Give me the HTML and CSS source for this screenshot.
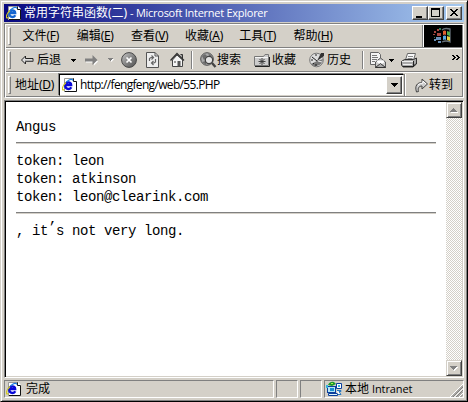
FILE: index.html
```html
<!DOCTYPE html>
<html lang="zh-CN">
<head>
<meta charset="utf-8">
<title>常用字符串函数(二)</title>
<link rel="stylesheet" href="styles.css">
</head>
<body>
<svg class="defs" width="0" height="0">
  <defs>
    <linearGradient id="ball" x1="0" y1="0" x2="1" y2="1"><stop offset="0" stop-color="#c8c8c8"/><stop offset=".5" stop-color="#858585"/><stop offset="1" stop-color="#505050"/></linearGradient>
    <symbol id="ie" viewBox="0 0 16 16">
      <path d="M3 1h9l3 3v11H3z" fill="#fff"/>
      <path d="M2.500 15V1.500H12" stroke="#999" fill="none"/>
      <path d="M11.500 1.500v3h3v10H3" fill="none" stroke="#111"/>
      <path d="M9.300 10.300C8 13 3.200 12.500 3.200 8.500S9 4.500 9.200 8H4" fill="none" stroke="currentColor" stroke-width="2.300"/>
      <path d="M2.500 12.500C-1 14.500 0 9 4 5.500" fill="none" stroke="#d0c828" stroke-width="1.300"/>
      <path d="M4.500 5c3-3 6-3.500 6.500-1.500" fill="none" stroke="#187ce0" stroke-width="1.200"/>
    </symbol>
  </defs>
</svg>
<div class="window">
  <header class="title">
    <svg class="i16 ie-title" viewBox="0 0 16 16"><use href="#ie"/></svg>
    <span class="cap-cn">常用字符串函数(二)</span><span class="cap-en">- Microsoft Internet Explorer</span>
    <div class="controls">
      <span class="btn"><svg viewBox="0 0 14 12"><path d="M3 9h6v2H3z"/></svg></span>
      <span class="btn"><svg viewBox="0 0 14 12"><path d="M2 1h9v9H2zM3 3v6h7V3z" fill-rule="evenodd"/></svg></span>
      <span class="btn close"><svg viewBox="0 0 14 12"><path d="M3 2h2v1h1v1h2V3h1V2h2v1h-1v1H9v1H8v1h1v1h1v1h1v1H9V8H8V7H6v1H5v1H3V8h1V7h1V6h1V5H5V4H4V3H3z"/></svg></span>
    </div>
  </header>

  <div class="bars">
    <nav class="bar menu">
      <i class="grip"></i>
      <span>文件<b>(<u>F</u>)</b></span><span>编辑<b>(<u>E</u>)</b></span><span>查看<b>(<u>V</u>)</b></span><span>收藏<b>(<u>A</u>)</b></span><span>工具<b>(<u>T</u>)</b></span><span>帮助<b>(<u>H</u>)</b></span>
      <div class="logo"><svg width="20" height="18" viewBox="0 0 20 18">
        <path d="M9 3c2-2 4-2 8-1v13c-4-2-6-1-8 0" fill="none" stroke="#667078" stroke-width="1.300"/>
        <path d="M10 4q2-1 3 0v4q-1-1-3 0z" fill="#e06030"/><path d="M14 4l3 1v4l-3-1z" fill="#50b050"/>
        <path d="M10 9q2-1 3 0v4q-1-1-3 0z" fill="#58a8e0"/><path d="M14 9l3 1v4l-3-1z" fill="#e8d040"/>
        <path d="M1 4h2v2H1zM4 2h2v2H4zM4 6h4v3H4zM0 7h2v1H0z" fill="#a84840"/><path d="M3 10h5v3H3zM1 12h2v2H1zM5 14h3v2H5z" fill="#6890b8"/><path d="M6 1h2v2H6zM1 10h1v1H1z" fill="#347858"/>
      </svg></div>
    </nav>

    <div class="bar tools">
      <i class="grip"></i>
      <svg class="back" width="13" height="10" viewBox="0 0 13 10"><path d="M.5 5l4-4v2.500h7.500v3H4.500V9z" fill="#ddd" stroke="#222"/><path d="M4 6h8" stroke="#777"/></svg>
      <span class="label lback">后退</span>
      <svg class="tri t1" width="5" height="3" viewBox="0 0 5 3"><path d="M0 0h5v1H4v1H3v1H2V2H1V1H0z"/></svg>
      <svg class="fwd" width="14" height="11" viewBox="0 0 14 11"><path d="M1 4.500h7v-3l5 5-4 4V7.500H1z" fill="#fff"/><path d="M0 3.500h7.500V0l5 5-5 5V6.500H0z" fill="#808080"/></svg>
      <svg class="tri t2" width="6" height="4" viewBox="0 0 6 4"><path d="M1 1h5L3.500 4z" fill="#fff"/><path d="M0 0h5v1H4v1H3v1H2V2H1V1H0z" fill="#808080"/></svg>
      <svg class="i16 stop" viewBox="0 0 16 16"><circle cx="8" cy="8" r="7.400" fill="url(#ball)" stroke="#484848"/><path d="M5.500 5.500l5 5m0-5l-5 5" stroke="#fff" stroke-width="1.700"/></svg>
      <svg class="refresh" width="13" height="16" viewBox="0 0 13 16"><path d="M.5.5h8.500l3.500 3.500v11.500H.5z" fill="#eee" stroke="#555"/><path d="M9 .5V4h3.500" fill="none" stroke="#555"/><path d="M3.500 9V6.500L5 5.500h2M5.500 3.500l2 2-2 2M9.500 7v3L8 11H6M7.500 9l-2 2 2 2" fill="none" stroke="#666" stroke-width="1.200"/></svg>
      <svg class="home" width="16" height="16" viewBox="0 0 16 16"><path d="M10.500 2.500h2v5" fill="#999" stroke="#333"/><path d="M2.500 8L7 3l5.500 5v6.500h-10z" fill="#f4f4f4" stroke="#444"/><path d="M.5 8.500L7 1.500l7 7" fill="none" stroke="#333" stroke-width="1.400"/><path d="M7.500 9h3v5.500h-3z" fill="#555"/><path d="M4 9h2v2H4z" fill="#999"/></svg>
      <i class="sep s1"></i>
      <svg class="search" width="17" height="16" viewBox="0 0 17 16"><circle cx="7" cy="7" r="6.300" fill="#aaa" stroke="#505050"/><path d="M2 4l3-2 2 2-3 4zM8 1l4 3-2 2zM2 10l4-1v4z" fill="#6c6c6c"/><circle cx="9" cy="8" r="3.700" fill="#e5e5e5" stroke="#444" stroke-width="1.300"/><path d="M12 11l3.500 4" stroke="#444" stroke-width="2.400"/></svg>
      <span class="label lsearch">搜索</span>
      <svg class="fav" width="16" height="14" viewBox="0 0 16 14"><path d="M.5 12.500v-9h9l1.500-2h3.500v11z" fill="#ccc" stroke="#777"/><path d="M1 4.500h13" stroke="#f6f6f6"/><path d="M1 13.500h14.500V4" fill="none" stroke="#222"/><path d="M8 5v7M4.500 8.500h7M5.500 6l5 5m0-5l-5 5" stroke="#333" stroke-width=".9"/></svg>
      <span class="label lfav">收藏</span>
      <svg class="i16 hist" viewBox="0 0 16 16"><circle cx="7.500" cy="8" r="6.800" fill="#ddd" stroke="#777"/><path d="M2 12q5 5 11-1l1-4-6 2z" fill="#777"/><path d="M12 1h3v3L8 9z" fill="#333"/><path d="M3 5l5 4M7 2v2M2 8h2M4 12l1-1M7 14v-2" fill="none" stroke="#222"/><path d="M9 9l4 1" stroke="#eee"/></svg>
      <span class="label lhist">历史</span>
      <i class="sep s2"></i>
      <svg class="mail" width="17" height="17" viewBox="0 0 17 17"><path d="M.5.5h8l2 2v10H.5z" fill="#f4f4f4" stroke="#666"/><path d="M2 3.500h5M2 5.500h6M2 7.500h5M2 9.500h3" stroke="#777"/><path d="M5.500 15.500V10L10.500 6l5 4v5.500z" fill="#ccc" stroke="#555"/><path d="M7 8.500h7v2L10.500 13 7 10z" fill="#fff"/><path d="M5.500 15.500l5-4 5 4z" fill="#aaa" stroke="#333"/></svg>
      <svg class="tri t3" width="5" height="3" viewBox="0 0 5 3"><path d="M0 0h5v1H4v1H3v1H2V2H1V1H0z"/></svg>
      <svg class="print" width="17" height="15" viewBox="0 0 17 15"><path d="M4.500 7l2-6.500h8l-2 6.500z" fill="#f8f8f8" stroke="#666"/><path d="M7 3.500h5M6.500 5.500h5" stroke="#888"/><path d="M.5 8.500l3-2h9l3-1.500v6l-3.500 3H2l-1.500-2z" fill="#aaa" stroke="#333"/><path d="M1 8.500h11M2 11.500h9" stroke="#eee"/><path d="M12.500 8v6M2 13.500h10l3-3" stroke="#222" fill="none"/></svg>
      <svg class="more" width="8" height="5" viewBox="0 0 8 5"><path d="M0 0h2v1h1v1h1v1H3v1H2v1H0V4h1V3h1V2H1V1H0zM4 0h2v1h1v1h1v1H7v1H6v1H4V4h1V3h1V2H5V1H4z"/></svg>
    </div>

    <div class="bar address">
      <i class="grip"></i>
      <span class="addr-label">地址<b>(<u>D</u>)</b></span>
      <div class="field"><svg class="i16 ie" viewBox="0 0 16 16"><use href="#ie"/></svg><span class="url">http://fengfeng/web/55.PHP</span><span class="drop"><svg width="7" height="4" viewBox="0 0 7 4"><path d="M0 0h7v1H6v1H5v1H4v1H3V3H2V2H1V1H0z"/></svg></span></div>
      <i class="split"></i>
      <svg class="go" width="13" height="15" viewBox="0 0 13 15"><path d="M1.500 14C-.5 8 2 4.500 7 4.500V1l5.500 5L7 11V8C4 8 2.500 10 3.500 13.500z" fill="#ccc" stroke="#444"/><path d="M3 7q2-2 5-2V3l3 3" fill="none" stroke="#fff"/></svg>
      <span class="label">转到</span>
    </div>
  </div>

  <div class="view">
    <main class="page">
      <p>Angus</p>
      <hr>
      <p>token: leon<br>token: atkinson<br>token: leon@clearink.com</p>
      <hr>
      <p>, it<span class="apos">’</span>s not very long.</p>
    </main>
    <div class="scroll">
      <span class="sb"><svg width="8" height="5" viewBox="0 0 8 5"><path d="M4 1h1v1h1v1h1v1h1v1H1V4z" fill="#fff"/><path d="M3 0h1v1h1v1h1v1h1v1H0V3h1V2h1V1h1z" fill="#808080"/></svg></span>
      <span class="sb"><svg width="8" height="5" viewBox="0 0 8 5"><path d="M1 1h7v1H7v1H6v1H5v1H4z" fill="#fff"/><path d="M0 0h7v1H6v1H5v1H4v1H3V3H2V2H1V1H0z" fill="#808080"/></svg></span>
    </div>
  </div>

  <footer class="status">
    <div class="pane main"><svg class="i16 ie" viewBox="0 0 16 16"><use href="#ie"/></svg><span>完成</span></div>
    <div class="pane"></div>
    <div class="pane"></div>
    <div class="pane zone">
      <svg class="i16" viewBox="0 0 16 16"><path d="M1 5h9v7H1z" fill="#0b3f9c"/><path d="M2 6h7v5H2z" fill="#b7e6f4"/><path d="M4 7h4v3H4z" fill="#1a8fd0"/><path d="M10.500 2.500h5v5h-5z" fill="#fff" stroke="#0b3f9c"/><path d="M12 4h2v2h-2z" fill="#35b5dc"/><path d="M2 4q2-4 6-3l2 2-4 2z" fill="#1d9a2a"/><path d="M5 2h2v1H5z" fill="#b8e850"/><path d="M2.500 12.500h9v2h-9z" fill="#dff4fa" stroke="#0b3f9c"/><path d="M11 9.500h4v1h-2l2 3h-3" fill="#fff" stroke="#2878c0"/><path d="M0 4h2v3H0z" fill="#30b6e0"/></svg>
      <span class="zcn">本地</span><span class="zen">Intranet</span>
      <svg class="size" width="13" height="13" viewBox="0 0 13 13"><path d="M0 13L13 0M4.500 13L13 4.500M9 13l4-4" stroke="#fff"/><path d="M1.500 13L13 1.500M3 13L13 3M6 13l7-7M7.500 13L13 7.500M10.500 13l2.500-2.500" stroke="#808080"/></svg>
    </div>
  </footer>
</div>
</body>
</html>
```
FILE: styles.css
```css
* { box-sizing: border-box; }
body { margin: 0; overflow: hidden; background: #d4d0c8; color: #000; font: 12px/16px "Noto Sans", "Noto Sans CJK SC", sans-serif; }
svg { display: block; flex: none; }
b { font-weight: normal; }
.defs { position: absolute; }
.i16 { width: 16px; height: 16px; }
.ie { color: #0808d8; }
.ie-title { color: #1464d0; }
.window { width: 468px; height: 402px; padding: 3px; border: 1px solid #d4d0c8; border-right-color: #000; border-bottom-color: #000; box-shadow: inset 1px 1px #fff, inset -1px -1px #808080; display: flex; flex-direction: column; }

.title { height: 18px; display: flex; align-items: center; padding-left: 2px; background: linear-gradient(90deg, #080880, #a6caf0); color: #fff; white-space: nowrap; flex: none; }
.cap-cn { margin-left: 2px; width: 106px; }
.cap-en { width: 138px; font-size: 11px; font-family: "Open Sans", sans-serif; letter-spacing: -.26px; }
.controls { display: flex; margin-left: auto; padding-right: 2px; }
.btn { width: 16px; height: 14px; background: #d4d0c8; border: 1px solid; border-color: #fff #404040 #404040 #fff; box-shadow: inset -1px -1px #808080; }
.btn svg { width: 14px; height: 12px; }
.close { margin-left: 2px; }

.bars { margin-top: 1px; height: 75px; border: 1px solid; border-color: #808080 #fff #fff #808080; box-shadow: inset 1px 1px #fff, inset -1px -1px #808080; padding: 1px; flex: none; }
.bar { display: flex; align-items: center; height: 24px; white-space: nowrap; border-bottom: 1px solid #808080; }
.bar + .bar { border-top: 1px solid #fff; }
.grip { width: 3px; height: 18px; margin-left: 2px; border: 1px solid; border-color: #fff #808080 #808080 #fff; flex: none; }
.label { width: 24px; flex: none; }
.menu { height: 23px; }
.menu > span { width: 54.200px; flex: none; }
.menu .grip { margin-right: 11.500px; }
.menu b, .addr-label b { font-size: 12px; letter-spacing: -.35px; }
u { text-underline-offset: 1px; }
.logo { margin-left: auto; width: 39px; height: 22px; background: #000; border-left: 1px solid #fff; box-shadow: -1px 0 #808080; display: grid; place-items: center; }
.back { margin-left: 10px; }
.lback { margin-left: 3px; }
.t1 { margin-left: 10px; }
.fwd { margin-left: 9px; }
.t2 { margin-left: 9px; }
.stop { margin-left: 7px; }
.refresh { margin-left: 9px; }
.home { margin-left: 11px; }
.sep { width: 2px; height: 18px; border-left: 1px solid #808080; border-right: 1px solid #fff; flex: none; }
.s1 { margin-left: 5px; }
.search { margin-left: 7px; }
.fav { margin-left: 13px; }
.lfav { margin-left: 2px; }
.hist { margin-left: 13px; }
.lhist { margin-left: 2px; }
.s2 { margin-left: 11px; }
.mail { margin-left: 6px; }
.t3 { margin-left: 2px; }
.print { margin-left: 7px; }
.more { margin: 0 2px 6px auto; }
.address { height: 25px; border-bottom: 0; }
.addr-label { margin-left: 4px; width: 44px; flex: none; }
.field { width: 345px; height: 22px; background: #fff; border: 1px solid; border-color: #000 #d4d0c8 #d4d0c8 #000; box-shadow: -1px -1px #808080; display: flex; align-items: center; padding-left: 2px; flex: none; }
.url { margin-left: 2px; font: 12px/16px "Open Sans", sans-serif; letter-spacing: -.67px; }
.drop { margin-left: auto; width: 16px; height: 18px; margin-right: 1px; background: #d4d0c8; border: 1px solid; border-color: #fff #404040 #404040 #fff; box-shadow: inset -1px -1px #808080; display: grid; place-items: center; }
.split { width: 2px; height: 22px; border-left: 1px solid #808080; border-right: 1px solid #fff; flex: none; }
.go { margin-left: 9px; }
.address .label { margin-left: 1px; }

.view { margin-top: 2px; height: 278px; border: 1px solid; border-color: #808080 #fff #fff #808080; padding: 1px; box-shadow: inset 1px 1px #000; display: flex; flex: none; }
.page { flex: 1; background: #fff; padding: 15px 10px; font: 14px/18px "Liberation Mono", monospace; letter-spacing: -.4px; }
.page p { margin: 0; padding-top: 1px; }
.page hr { height: 2px; margin: 6px 0 7px; border: 0; border-top: 1px solid #808080; border-bottom: 1px solid #d4d0c8; }
.page hr + p { margin-top: -1px; padding-top: 2px; }
.apos { position: relative; top: -3px; }
.scroll { width: 16px; display: flex; flex-direction: column; justify-content: space-between; background: repeating-conic-gradient(#fff 0 25%, #d4d0c8 0 50%) 0 0 / 2px 2px; }
.sb { width: 16px; height: 16px; background: #d4d0c8; border: 1px solid; border-color: #d4d0c8 #404040 #404040 #d4d0c8; box-shadow: inset 1px 1px #fff, inset -1px -1px #808080; display: grid; place-items: center; }

.status { height: 18px; margin-top: 2px; display: flex; gap: 2px; flex: none; }
.pane { width: 22px; border: 1px solid; border-color: #808080 #fff #fff #808080; display: flex; align-items: center; white-space: nowrap; }
.main { flex: 1; padding-left: 1px; }
.main span { margin-left: 4px; }
.zone { width: 140px; padding-left: 1px; }
.zcn { margin-left: 3px; width: 27px; }
.zen { font: 11px/16px "Open Sans", sans-serif; letter-spacing: -.1px; }
.size { margin: 3px 0 0 auto; }
```
